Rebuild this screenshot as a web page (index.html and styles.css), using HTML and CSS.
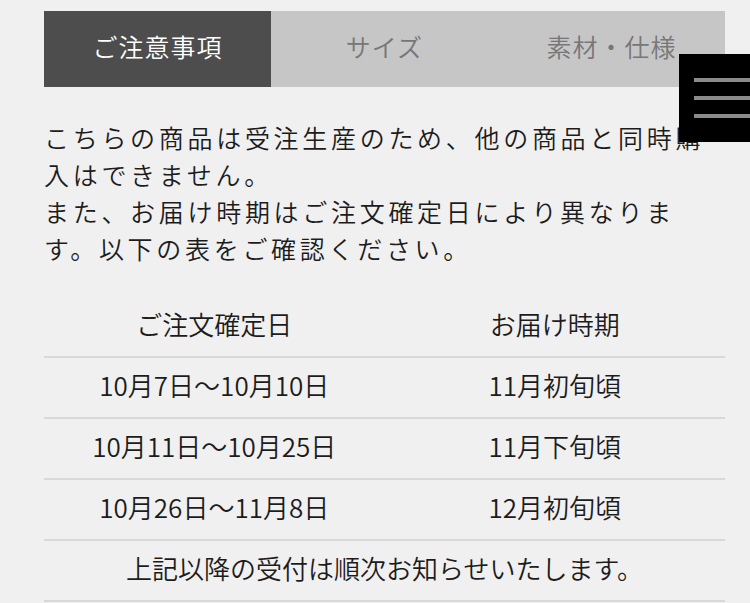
FILE: index.html
```
<!DOCTYPE html>
<html lang="ja">
<head>
<meta charset="utf-8">
<link rel="stylesheet" href="styles.css">
</head>
<body>
<div class="page">
  <div class="tabs">
    <div class="tab active">ご注意事項</div>
    <div class="tab">サイズ</div>
    <div class="tab">素材・仕様</div>
  </div>
  <p class="note">こちらの商品は受注生産のため、他の商品と同時購入はできません。<br>また、お届け時期はご注文確定日により異なります。以下の表をご確認ください。</p>
  <div class="table">
    <div class="row">
      <div class="cell">ご注文確定日</div>
      <div class="cell">お届け時期</div>
    </div>
    <div class="row">
      <div class="cell">10月7日〜10月10日</div>
      <div class="cell">11月初旬頃</div>
    </div>
    <div class="row">
      <div class="cell">10月11日〜10月25日</div>
      <div class="cell">11月下旬頃</div>
    </div>
    <div class="row">
      <div class="cell">10月26日〜11月8日</div>
      <div class="cell">12月初旬頃</div>
    </div>
    <div class="row">
      <div class="cell full">上記以降の受付は順次お知らせいたします。</div>
    </div>
  </div>
</div>
<div class="menu-btn">
  <span class="bar"></span>
  <span class="bar"></span>
  <span class="bar"></span>
</div>
</body>
</html>
```
FILE: styles.css
```
html, body {
  margin: 0;
  padding: 0;
  background: #f0f0f0;
}
body {
  font-family: "Noto Sans CJK JP", "Noto Sans", sans-serif;
  font-weight: 350;
  color: #1c1c1c;
  overflow: hidden;
}
.page {
  width: 681px;
  padding: 11px 0 0 44px;
}
.tabs {
  display: grid;
  grid-template-columns: 1fr 1fr 1fr;
  height: 76px;
  background: #c6c6c6;
}
.tab {
  display: flex;
  align-items: center;
  justify-content: center;
  padding-bottom: 7px;
  box-sizing: border-box;
  font-size: 25px;
  color: #777;
  letter-spacing: 1px;
}
.tab.active {
  background: #4d4d4d;
  color: #fff;
}
.note {
  margin: 32px 0 0;
  font-size: 25px;
  line-height: 37px;
  letter-spacing: 3.7px;
}
.table {
  margin-top: 30px;
}
.row {
  display: grid;
  grid-template-columns: 1fr 1fr;
  height: 59px;
  border-bottom: 2px solid #d8d8d8;
}
.cell {
  display: flex;
  align-items: center;
  justify-content: center;
  padding-bottom: 6px;
  box-sizing: border-box;
  font-size: 26px;
}
.cell.full {
  grid-column: 1 / 3;
}
.menu-btn {
  position: absolute;
  left: 679px;
  top: 54px;
  width: 71px;
  height: 88px;
  background: #000;
  display: flex;
  flex-direction: column;
  justify-content: center;
  gap: 14px;
  padding-left: 15px;
  box-sizing: border-box;
}
.bar {
  display: block;
  height: 4px;
  background: #8a8a8a;
}
```
